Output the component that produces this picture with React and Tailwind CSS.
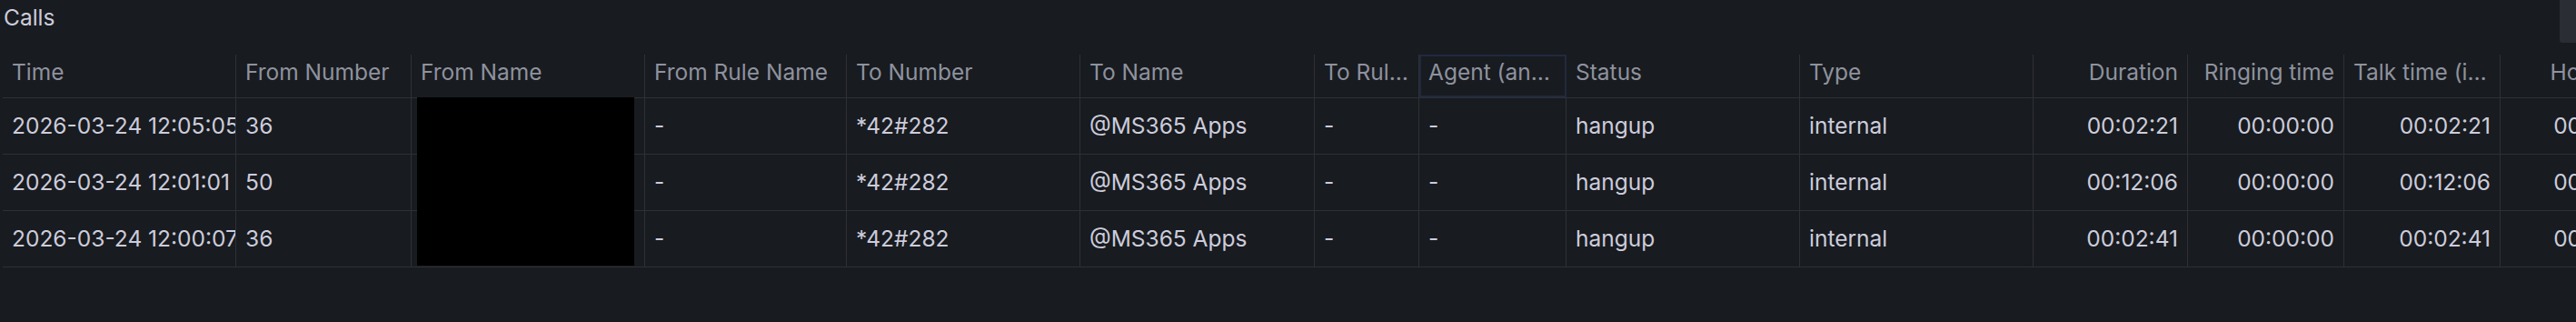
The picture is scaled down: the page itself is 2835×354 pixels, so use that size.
import React from 'react';

const columns = [
  { key: 'time', label: 'Time' },
  { key: 'fromNumber', label: 'From Number' },
  { key: 'fromName', label: 'From Name' },
  { key: 'fromRule', label: 'From Rule Name' },
  { key: 'toNumber', label: 'To Number' },
  { key: 'toName', label: 'To Name' },
  { key: 'toRule', label: 'To Rule Name' },
  { key: 'agent', label: 'Agent (answered)' },
  { key: 'status', label: 'Status' },
  { key: 'type', label: 'Type' },
  { key: 'duration', label: 'Duration', right: true },
  { key: 'ringing', label: 'Ringing time', right: true },
  { key: 'talk', label: 'Talk time (incl. hold)', right: true },
  { key: 'hold', label: 'Hold time', right: true },
];

const calls = [
  { time: '2026-03-24 12:05:05', fromNumber: '36', duration: '00:02:21', talk: '00:02:21' },
  { time: '2026-03-24 12:01:01', fromNumber: '50', duration: '00:12:06', talk: '00:12:06' },
  { time: '2026-03-24 12:00:07', fromNumber: '36', duration: '00:02:41', talk: '00:02:41' },
];

const gridCols =
  'grid grid-cols-[257px_193px_257px_222px_257px_258px_115px_162px_257px_257px_170px_172px_172px_176px]';

function HeaderCell({ col }) {
  const focused = col.key === 'agent';
  return (
    <div
      className={`h-[47px] border-r border-[#2e3036] px-[10px] pt-[3px] overflow-hidden ${
        focused ? 'outline-2 -outline-offset-2 outline-[#1f2a3e]' : ''
      }`}
    >
      <div className={`truncate leading-8 ${col.right ? 'text-right' : ''}`}>{col.label}</div>
    </div>
  );
}

function Cell({ col, value }) {
  return (
    <div
      className={`h-[61px] border-r border-[#2e3036] px-[10px] flex items-center overflow-hidden whitespace-nowrap ${
        col.right ? 'justify-end' : ''
      }`}
    >
      {value}
    </div>
  );
}

export default function App() {
  const rowValue = (row, key) => {
    switch (key) {
      case 'time':
        return row.time;
      case 'fromNumber':
        return row.fromNumber;
      case 'fromName':
        return '';
      case 'fromRule':
      case 'toRule':
      case 'agent':
        return '-';
      case 'toNumber':
        return '*42#282';
      case 'toName':
        return '@MS365 Apps';
      case 'status':
        return 'hangup';
      case 'type':
        return 'internal';
      case 'duration':
        return row.duration;
      case 'ringing':
        return '00:00:00';
      case 'talk':
        return row.talk;
      case 'hold':
        return '00:00:00';
      default:
        return '';
    }
  };

  return (
    <div className="relative w-[2835px] h-[354px] overflow-hidden bg-[#181b1f] font-[Inter,sans-serif] text-[24.5px] text-[#ccccdc]">
      <div className="absolute top-0 right-0 w-[18px] h-[47px] rounded-bl-[3px] bg-[#2a2d33]" />

      <h2 className="pl-[4px] pt-[3px] h-[60px] leading-8 text-[24.5px] font-normal text-[#ccccdc]">Calls</h2>

      <div className="relative ml-[3px] w-max">
        <div className={`${gridCols} border-b border-[#2e3036] text-[#8e929e]`}>
          {columns.map((col) => (
            <HeaderCell key={col.key} col={col} />
          ))}
        </div>

        {calls.map((row, idx) => (
          <div key={idx} className={`${gridCols} border-b border-[#2e3036]`}>
            {columns.map((col) => (
              <Cell key={col.key} col={col} value={rowValue(row, col.key)} />
            ))}
          </div>
        ))}

        {/* redacted names */}
        <div className="absolute left-[456px] top-[47px] w-[239px] h-[185px] bg-black" />
      </div>
    </div>
  );
}
